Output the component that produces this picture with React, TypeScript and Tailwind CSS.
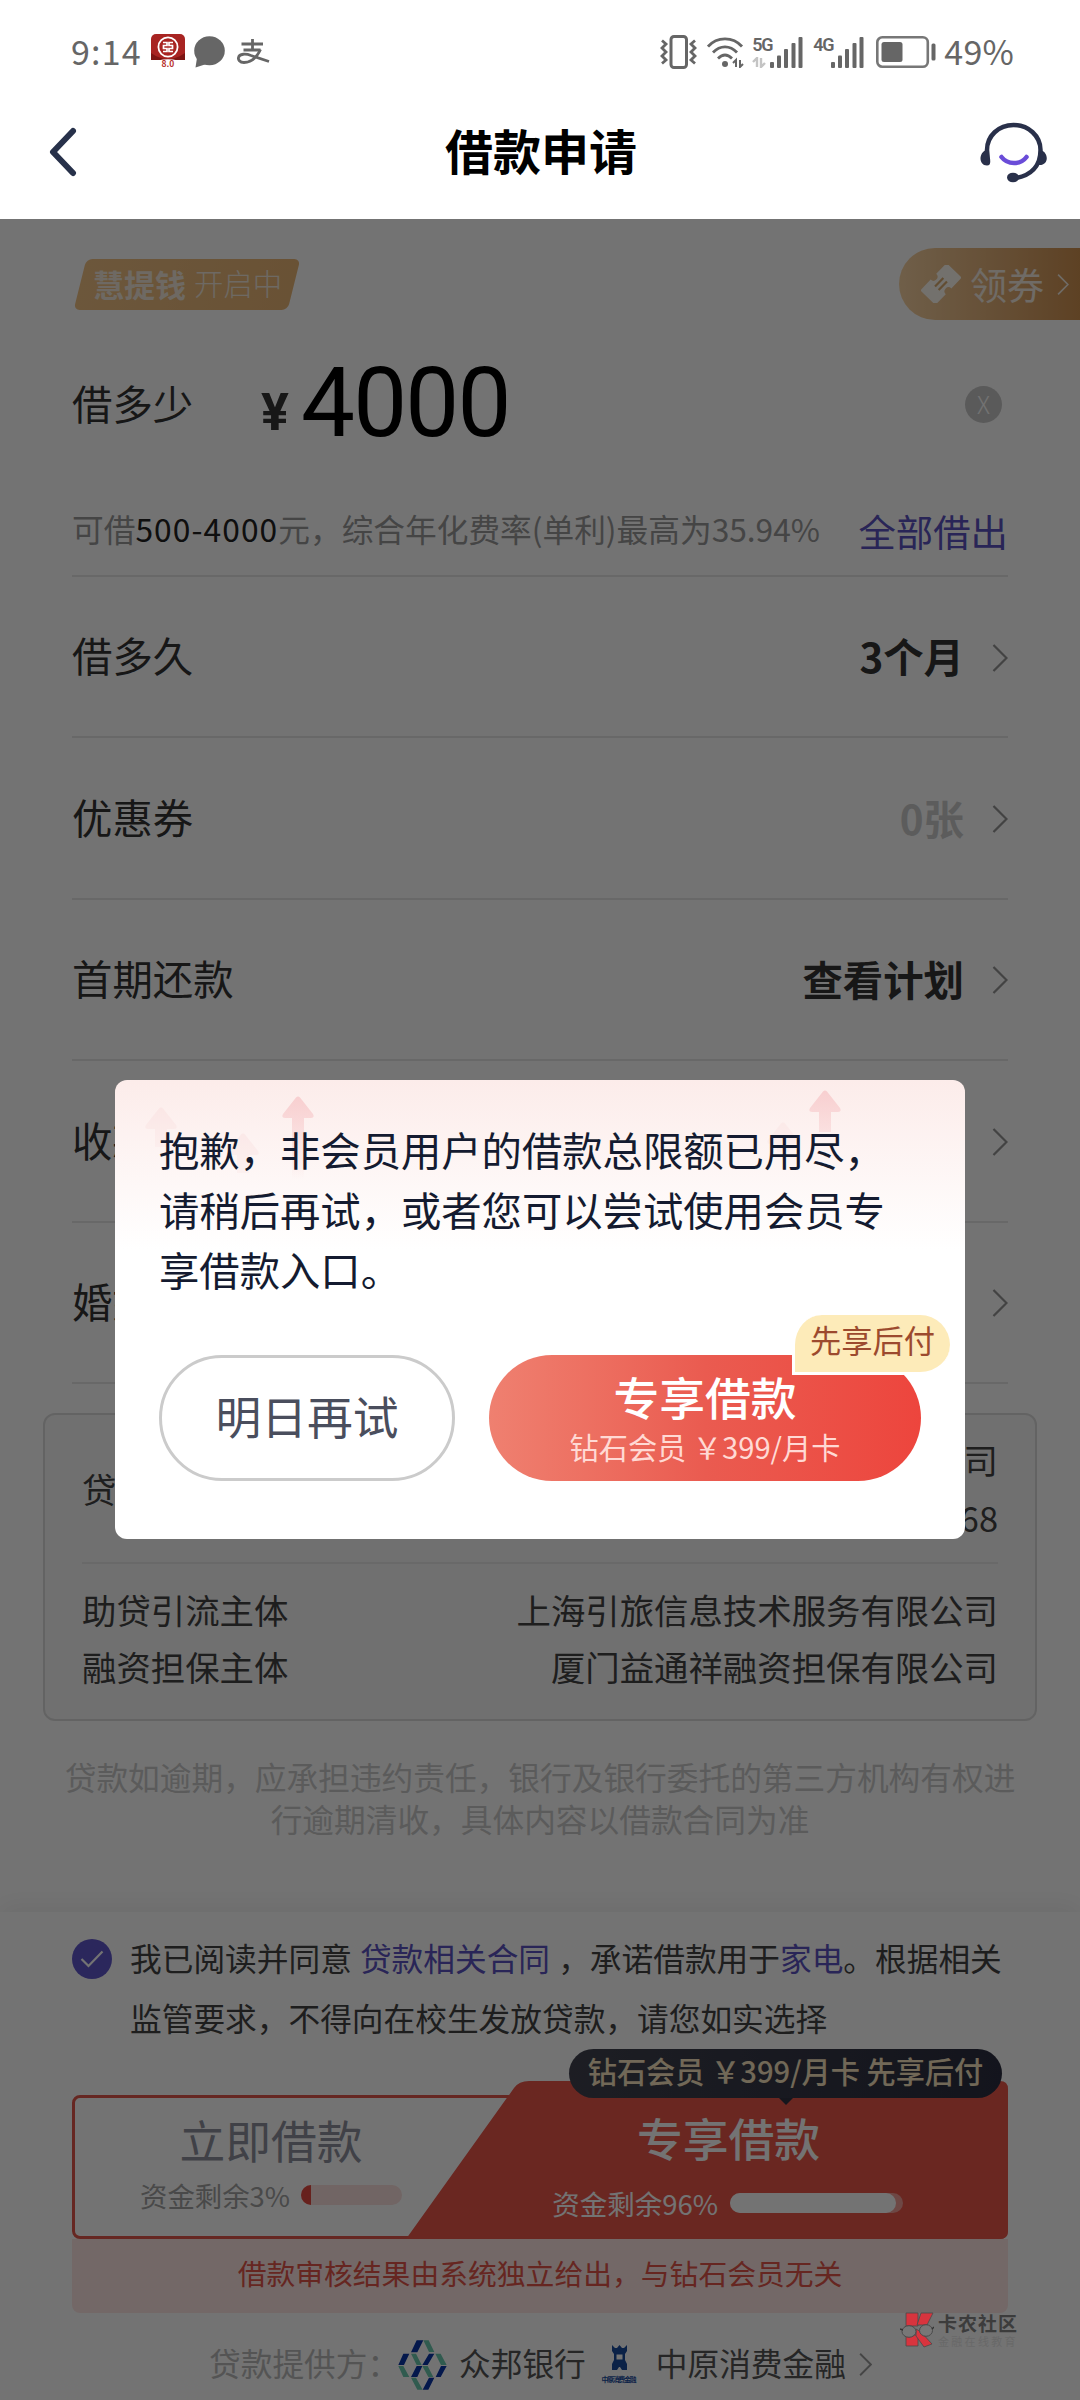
import clsx from 'clsx';

type Row = { label: string; value?: string; muted?: boolean };

const rows: Row[] = [
  { label: '借多久', value: '3个月' },
  { label: '优惠券', value: '0张', muted: true },
  { label: '首期还款', value: '查看计划' },
  { label: '收款' },
  { label: '婚姻' },
];

function Chevron({ className }: { className?: string }) {
  return (
    <svg viewBox="0 0 16 30" className={className} fill="none" stroke="currentColor" strokeWidth="2.4">
      <path d="M1 1L15 15L1 29" />
    </svg>
  );
}

function SignalBars() {
  return (
    <svg width="33" height="31" viewBox="0 0 33 31" fill="#666666">
      <rect x="0" y="25" width="4" height="6" rx="1" />
      <rect x="7" y="18.5" width="4" height="12.5" rx="1" />
      <rect x="14" y="12" width="4" height="19" rx="1" />
      <rect x="21.5" y="6" width="4" height="25" rx="1" />
      <rect x="28.5" y="0" width="4" height="31" rx="1" />
    </svg>
  );
}

function StatusBar() {
  return (
    <div className="flex h-[104px] items-center justify-between pr-[66px] pl-[71px] text-[34px] leading-none text-[#666666]">
      <div className="flex items-center">
        <span className="w-[80px] pb-[2px] tracking-[1.2px]">9:14</span>
        {/* Bank app */}
        <svg width="34" height="36" viewBox="0 0 34 36">
          <rect width="34" height="26" rx="5" fill="#a82422" />
          <path d="M0 19Q17 31 34 19V26H0Z" fill="#7d1513" />
          <circle cx="17" cy="13" r="9.6" fill="none" stroke="#fff" strokeWidth="1.8" />
          <path
            d="M12 8.5H16V11.5H12.5V14.5H16V17.5H12M22 8.5H18V11.5H21.5V14.5H18V17.5H22"
            fill="none"
            stroke="#fff"
            strokeWidth="1.7"
          />
          <path d="M7 26.5Q17 24 27 26.5V34H7Z" fill="#fff" />
          <text x="17" y="33" textAnchor="middle" fontSize="8.5" fontWeight="700" fill="#b8322e">
            8.0
          </text>
        </svg>
        {/* Message bubble */}
        <svg width="31" height="32" viewBox="0 0 31 32" className="ml-[9px]" fill="#666666">
          <ellipse cx="15.5" cy="14.7" rx="15.3" ry="14.5" />
          <path d="M3 22L1.5 31.5L14 27.5Z" />
        </svg>
        {/* Alipay mark */}
        <svg width="33" height="26" viewBox="0 0 33 26" className="ml-3" fill="none" stroke="#666666" strokeWidth="2.8">
          <path d="M4.5 5H26M15.5 0V11M6.5 11H23.5" />
          <path d="M23.5 10.5C20 18 14 23.5 7 23.5C2.5 23.5 1 20.5 1.5 18.5C2.5 14.5 9 14.5 14 16.5L32 22.5" />
        </svg>
      </div>
      <div className="flex items-center">
        {/* Vibrate */}
        <svg width="37" height="34" viewBox="0 0 37 34" fill="none" stroke="#666666">
          <rect x="11" y="1.5" width="15.5" height="31" rx="3" strokeWidth="3" />
          <path d="M2 5.5L6 9L2 13L6 17L2 21L6 25L2 28.5M35 5.5L31 9L35 13L31 17L35 21L31 25L35 28.5" strokeWidth="2.8" />
        </svg>
        {/* Wifi */}
        <svg width="37" height="31" viewBox="0 0 37 31" className="ml-[10px]" fill="none" stroke="#666666" strokeWidth="2.8">
          <path d="M1 9.5C10 -0.8 26 -0.8 35 9.5M6 15.5C13 8 23 8 30 15.5M11 21.5C15.5 17 20.5 17 25 21.5" />
          <circle cx="18" cy="27" r="3" fill="#666666" stroke="none" />
          <path d="M26 26L29 23V30M36 27L33 30V23" strokeWidth="2" />
        </svg>
        <div className="ml-[8px] flex h-[31px] w-[18px] flex-col justify-between">
          <span className="font-[Roboto] text-[18px] leading-[15px] font-semibold tracking-[-1.5px]">5G</span>
          <svg width="14" height="11" viewBox="0 0 14 11" fill="none" stroke="#c4c4c4" strokeWidth="2.4">
            <path d="M1 5L5 1V10M13 6L9 10V1" />
          </svg>
        </div>
        <SignalBars />
        <span className="ml-[10px] h-[31px] w-[18px] font-[Roboto] text-[18px] leading-[15px] font-semibold tracking-[-1.5px]">
          4G
        </span>
        <SignalBars />
        {/* Battery */}
        <svg width="60" height="32" viewBox="0 0 60 32" className="ml-3">
          <rect x="1.3" y="1.3" width="50.5" height="29.4" rx="5" fill="none" stroke="#777777" strokeWidth="2.6" />
          <rect x="5.5" y="6" width="21" height="20" rx="2.5" fill="#666666" />
          <rect x="55.5" y="7.5" width="4" height="17" rx="1.5" fill="#666666" />
        </svg>
        <span className="ml-2 pb-[2px] tracking-[0.2px]">49%</span>
      </div>
    </div>
  );
}

function Header() {
  return (
    <header className="flex h-[115px] items-start justify-between pr-[32px] pl-[48px]">
      <svg width="30" height="50" viewBox="0 0 30 50" className="mt-[23px]" fill="none" stroke="#27314a" strokeWidth="6">
        <path d="M25 4L5 25L25 46" strokeLinecap="round" strokeLinejoin="round" />
      </svg>
      <h1 className="mt-[13px] ml-[24px] text-[48px] leading-[64px] font-bold text-black">借款申请</h1>
      <svg width="68" height="62" viewBox="0 0 68 62" className="mt-[18px]" fill="none">
        <path d="M7 36V28C7 14 18.5 3 33.5 3S60.5 14 60.5 28C60.5 45 50 53.5 36 56" stroke="#29304a" strokeWidth="4.5" />
        <path d="M6 28C-1.5 31 -1.5 43.5 7 43.5C12 43.5 10 38 9 28ZM61 28C69 31 69 43.5 59 43Z" fill="#29304a" />
        <ellipse cx="33" cy="55.5" rx="6" ry="4.8" fill="#29304a" />
        <path d="M21.5 35C27.5 43 40.5 43 46.5 35" stroke="#6a4cd8" strokeWidth="4.5" strokeLinecap="round" />
      </svg>
    </header>
  );
}

function PromoRow() {
  return (
    <div className="mt-[29px] flex h-[72px] items-center justify-between pl-[80px]">
      <div className="relative flex h-[51px] w-[214px] items-center pb-[2px] pl-[13px] text-[31px] leading-none text-[#f3e9dc]">
        <div className="absolute inset-0 -skew-x-[14deg] rounded-md bg-linear-to-r from-[#f0c084] to-[#e9b676]" />
        <b className="relative">慧提钱</b>
        <span className="relative ml-[8px] text-[29.4px] font-light">开启中</span>
      </div>
      <div className="flex h-[72px] w-[181px] items-center rounded-l-full bg-linear-to-r from-[#f6d2a2] to-[#cf9150] pl-[22px] text-[#f6ede2]">
        <svg width="40" height="38" viewBox="0 0 40 38">
          <g transform="rotate(-46 20 19)">
            <path
              d="M3 8.5H16A4 4 0 0 0 24 8.5H37A2 2 0 0 1 39 10.5V27.500A2 2 0 0 1 37 29.500H24A4 4 0 0 0 16 29.500H3A2 2 0 0 1 1 27.500V10.500A2 2 0 0 1 3 8.500Z"
              fill="#fffaf2"
            />
            <path d="M14 16.500H26M14 21.500H26" stroke="#d9ac70" strokeWidth="2.200" />
          </g>
        </svg>
        <span className="ml-[9px] text-[37px] leading-[40px]">领券</span>
        <Chevron className="ml-[13px] h-[21px] w-[12px]" />
      </div>
    </div>
  );
}

function AmountSection() {
  return (
    <>
      <div className="mx-[72px] flex h-[168px] items-center">
        <span className="w-[187px] pb-[2px] text-[40.4px] text-[#333333]">借多少</span>
        <span className="mt-[18px] ml-[2px] w-[40px] font-[Roboto] text-[52px] leading-none font-bold text-[#333333]">¥</span>
        <span className="-mt-[2px] font-[Roboto] text-[96px] leading-none tracking-[-1.8px] text-black">4000</span>
        <span className="mr-[6px] ml-auto flex size-[37px] items-center justify-center rounded-full bg-[#c8c8c8] text-[24px] leading-none font-light text-white">
          X
        </span>
      </div>
      <div className="mx-[72px] flex h-[89px] items-center justify-between border-b-2 border-[#e6e6e6] pb-[7px] whitespace-nowrap">
        <p className="text-[31.7px] leading-[40px] text-[#999999]">
          可借<span className="tracking-[1.1px] text-[#222222]">500-4000</span>元，综合年化费率(单利)最高为35.94%
        </p>
        <span className="mt-[6px] text-[37.4px] leading-[40px] text-[#5b52c0]">全部借出</span>
      </div>
    </>
  );
}

function LenderBox() {
  return (
    <div className="mx-[43px] mt-[29px] h-[308px] rounded-xl border-2 border-[#dcdcdc] bg-[#f8f8f8] px-[37px] text-[34.4px] text-[#444444]">
      <div className="flex h-[149px] items-center justify-between border-b-2 border-[#e9e9e9]">
        <span>贷款</span>
        <div className="text-right leading-[58px]">
          <p>公司</p>
          <p>68</p>
        </div>
      </div>
      <div className="flex flex-col pt-[17px] leading-[57px]">
        <div className="flex justify-between">
          <span>助贷引流主体</span>
          <span>上海引旅信息技术服务有限公司</span>
        </div>
        <div className="flex justify-between">
          <span>融资担保主体</span>
          <span>厦门益通祥融资担保有限公司</span>
        </div>
      </div>
    </div>
  );
}

function LoanButtons() {
  return (
    <div className="relative mt-[34px] h-[158px]">
      <div className="absolute inset-x-0 top-[14px] bottom-0 rounded-lg border-3 border-[#e2584c]" />
      <div className="absolute inset-y-0 right-0 w-[602px] bg-[#ea574b] [clip-path:path('M123_0H594Q602_0_602_8V150Q602_158_594_158H0L108_7Q113_0_123_0Z')]" />
      <div className="relative flex h-full justify-between">
        <div className="flex flex-col items-center pt-[29px] pl-[68px]">
          <span className="text-[45.8px] leading-[58px] text-[#8f919e]">立即借款</span>
          <div className="mt-[11px] flex items-center gap-[11px] text-[27.4px] leading-[32px] text-[#a3a3a3]">
            资金剩余3%
            <div className="h-[20px] w-[101px] overflow-hidden rounded-full bg-[#fbe0dd]">
              <div className="h-full w-[10%] bg-[#e44a40]" />
            </div>
          </div>
        </div>
        <div className="flex flex-col items-center pt-[27px] pr-[105px] text-white">
          <span className="ml-[2px] text-[45.8px] leading-[58px] font-medium">专享借款</span>
          <div className="mt-[21px] flex items-center gap-[12px] text-[27.5px] leading-[32px]">
            资金剩余96%
            <div className="h-[20px] w-[173px] rounded-full bg-[#f3a09a]">
              <div className="h-full w-[96%] rounded-full bg-white" />
            </div>
          </div>
        </div>
      </div>
      {/* Price tooltip */}
      <div className="absolute -top-[32px] right-[6px] flex h-[49px] w-[433px] items-center justify-center rounded-full bg-linear-to-r from-[#40424f] to-[#2c2e40] pb-[6px] text-[29.2px] leading-none font-medium whitespace-nowrap text-[#fbe6c2]">
        钻石会员 ￥399/月卡 先享后付
        <div className="absolute top-full left-[210px] border-x-7 border-t-7 border-x-transparent border-t-[#303242]" />
      </div>
    </div>
  );
}

function ProviderRow() {
  return (
    <div className="flex h-[52px] items-center pl-[137px] text-[31.7px] leading-none whitespace-nowrap text-[#555555]">
      <span className="w-[189px] text-[#bbbbbb]">贷款提供方：</span>
      <svg width="49" height="50" viewBox="54 127 147 150" className="mt-[4px]">
        <path
          d="M110 128H130L112 164H93ZM70 168H88L72 202H55ZM147 168H163L143 202H127ZM110 205H127L112 238H93ZM183 205H200L182 238H167ZM147 240H163L145 276H128Z"
          fill="#0a35a8"
        />
        <path
          d="M130 128H146L163 163H147ZM55 205H70L88 238H70ZM93 168H108L125 202H110ZM127 205H143L160 238H145ZM166 168H182L200 202H183ZM93 240H108L128 276H112Z"
          fill="#6cc9b0"
        />
      </svg>
      <span className="ml-[12px]">众邦银行</span>
      <svg width="36" height="40" viewBox="0 0 36 40" className="mt-[4px] ml-[15px]">
        <path
          d="M11 0L14 3H16L18.5 0L21 3H23L26 0V6L24 9V15L26 19V25H21L19 22H18L16 25H11V19L13 15V9L11 6Z"
          fill="#1a4c9e"
        />
        <rect x="15.5" y="9.5" width="6" height="5" fill="#fff" />
        <text x="18" y="36.5" textAnchor="middle" fontSize="7" fontWeight="700" textLength="35" fill="#1a4c9e">
          中原消费金融
        </text>
      </svg>
      <span className="ml-[19px]">中原消费金融</span>
      <Chevron className="mt-[3px] ml-[13px] h-[23px] w-[13px] text-[#999999]" />
    </div>
  );
}

function Footer() {
  return (
    <footer className="mt-auto h-[488px] bg-white px-[72px] pt-[15px] shadow-[0_-6px_24px_rgba(0,0,0,0.06)]">
      <div className="flex text-[31.7px] leading-[60px] whitespace-nowrap text-[#444444]">
        <span className="mt-[12px] flex size-[40px] items-center justify-center rounded-full bg-[#6158cc]">
          <svg width="24" height="18" viewBox="0 0 24 18" fill="none" stroke="#fff" strokeWidth="2.2">
            <path d="M1.5 9L8.5 16L22.5 1.5" />
          </svg>
        </span>
        <p className="ml-[18px]">
          我已阅读并同意 <span className="mx-[1px] text-[#5b52c0]">贷款相关合同</span> ，承诺借款用于
          <span className="text-[#5b52c0]">家电</span>。根据相关
          <br />
          监管要求，不得向在校生发放贷款，请您如实选择
        </p>
      </div>
      <LoanButtons />
      <p className="flex h-[74px] justify-center rounded-b-lg bg-[#fee7e4] pt-[13px] text-[28.8px] leading-[42px] text-[#e2544a]">
        借款审核结果由系统独立给出，与钻石会员无关
      </p>
      <div className="pt-[24px]">
        <ProviderRow />
      </div>
    </footer>
  );
}

function UpArrow({ className }: { className?: string }) {
  return (
    <svg width="32" height="84" viewBox="0 0 32 84" preserveAspectRatio="xMidYMin slice" className={className}>
      <defs>
        <linearGradient id="arrow" x1="0" y1="0" x2="0" y2="1">
          <stop offset="0" stopColor="#f8cfd0" />
          <stop offset="1" stopColor="#f8cfd0" stopOpacity="0" />
        </linearGradient>
      </defs>
      <path d="M14 1.5Q16 -0.5 18 1.5L31 18Q33 22 29 22H22V84H10V22H3Q-1 22 1 18Z" fill="url(#arrow)" />
    </svg>
  );
}

function LimitDialog() {
  return (
    <div className="relative h-[459px] w-[850px] overflow-hidden rounded-xl bg-white bg-linear-to-b from-[#fcecea] to-white to-[37%] px-[44px] pt-[39px]">
      <UpArrow className="absolute top-[16px] left-[167px]" />
      <UpArrow className="absolute top-[10px] left-[694px] h-[42px]" />
      <UpArrow className="absolute top-[27px] left-[30px] h-[40px] opacity-25" />
      <UpArrow className="absolute top-[53px] left-[112px] h-[40px] opacity-25" />
      <UpArrow className="absolute top-[42px] left-[652px] h-[30px] opacity-20" />
      <p className="relative text-[40.35px] leading-[60px] whitespace-nowrap text-[#141b30]">
        抱歉，非会员用户的借款总限额已用尽，
        <br />
        请稍后再试，或者您可以尝试使用会员专
        <br />
        享借款入口。
      </p>
      <div className="mt-[56px] flex gap-[34px]">
        <button className="h-[126px] w-[296px] shrink-0 rounded-full border-3 border-[#cbcbcb] pb-[5px] text-[45.8px] leading-none text-[#4a4e5d]">
          明日再试
        </button>
        <button className="relative flex h-[126px] w-[432px] shrink-0 flex-col items-center rounded-full bg-linear-to-r from-[#ef8070] via-[#ea5b50] to-[#ed453d] pt-[12px] text-white">
          <span className="text-[45.8px] leading-[58px] font-medium">专享借款</span>
          <span className="mt-[2px] text-[29.2px] leading-[38px] text-[#ffd9d4]">钻石会员 ￥399/月卡</span>
          <span className="absolute -top-[40px] left-[303px] flex h-[60px] w-[158px] items-start justify-center rounded-t-[30px] rounded-br-[30px] border-b-3 border-l-3 border-white bg-[#fdebb9] pt-[5px] text-[31.3px] leading-[40px] whitespace-nowrap text-[#9c4a2e]">
            先享后付
          </span>
        </button>
      </div>
    </div>
  );
}

function Watermark() {
  return (
    <div className="absolute top-[2312px] left-[900px] flex items-start gap-[4px]">
      <svg width="34" height="36" viewBox="0 0 34 36">
        <path d="M6 1H18V14H6ZM6 23H18V34H6Z" fill="#d8343e" stroke="#4a4a4a" strokeWidth="0.8" />
        <path d="M21 1H33L27 13H17ZM16 17L21 20L32 32L24 35L16 24Z" fill="#d8343e" stroke="#4a4a4a" strokeWidth="0.8" />
        <ellipse cx="9" cy="19.5" rx="7" ry="5.8" fill="#777777" stroke="#4a4a4a" />
        <ellipse cx="26" cy="18.5" rx="6.5" ry="5.8" fill="#777777" stroke="#4a4a4a" />
        <path d="M0 17L3 18M32 17L34 15" stroke="#333" strokeWidth="1.5" />
      </svg>
      <div className="flex flex-col whitespace-nowrap">
        <span className="text-[19px] leading-[22px] font-bold tracking-[1px] text-[#3c3c3c]">卡农社区</span>
        <span className="text-[11px] leading-[14px] tracking-[2.3px] text-[#686868]">金融在线教育</span>
      </div>
    </div>
  );
}

export default function App() {
  return (
    <div className="relative flex h-[2400px] w-[1080px] flex-col overflow-hidden bg-white font-['Noto_Sans_CJK_SC','Noto_Sans',sans-serif]">
      <StatusBar />
      <Header />

      <main className="relative flex flex-1 flex-col bg-white">
        <PromoRow />
        <AmountSection />
        {rows.map((row) => (
          <div
            key={row.label}
            className="mx-[72px] flex h-[161.4px] shrink-0 items-center border-b-2 border-[#e6e6e6] pb-[2px] text-[40.4px]"
          >
            <span className="text-[#333333]">{row.label}</span>
            <span className={clsx('mt-[2px] mr-[28px] ml-auto font-bold', row.muted ? 'text-[#cccccc]' : 'text-[#333333]')}>
              {row.value}
            </span>
            <Chevron className="mt-[4px] h-[28px] w-[16px] text-[#949494]" />
          </div>
        ))}
        <LenderBox />
        <p className="mt-[34px] text-center text-[31.7px] leading-[42px] text-[#cacaca]">
          贷款如逾期，应承担违约责任，银行及银行委托的第三方机构有权进
          <br />
          行逾期清收，具体内容以借款合同为准
        </p>
        <Footer />

        {/* Mask + dialog */}
        <div className="absolute inset-0 flex items-center justify-center bg-black/55">
          <LimitDialog />
        </div>
      </main>

      <Watermark />
    </div>
  );
}
